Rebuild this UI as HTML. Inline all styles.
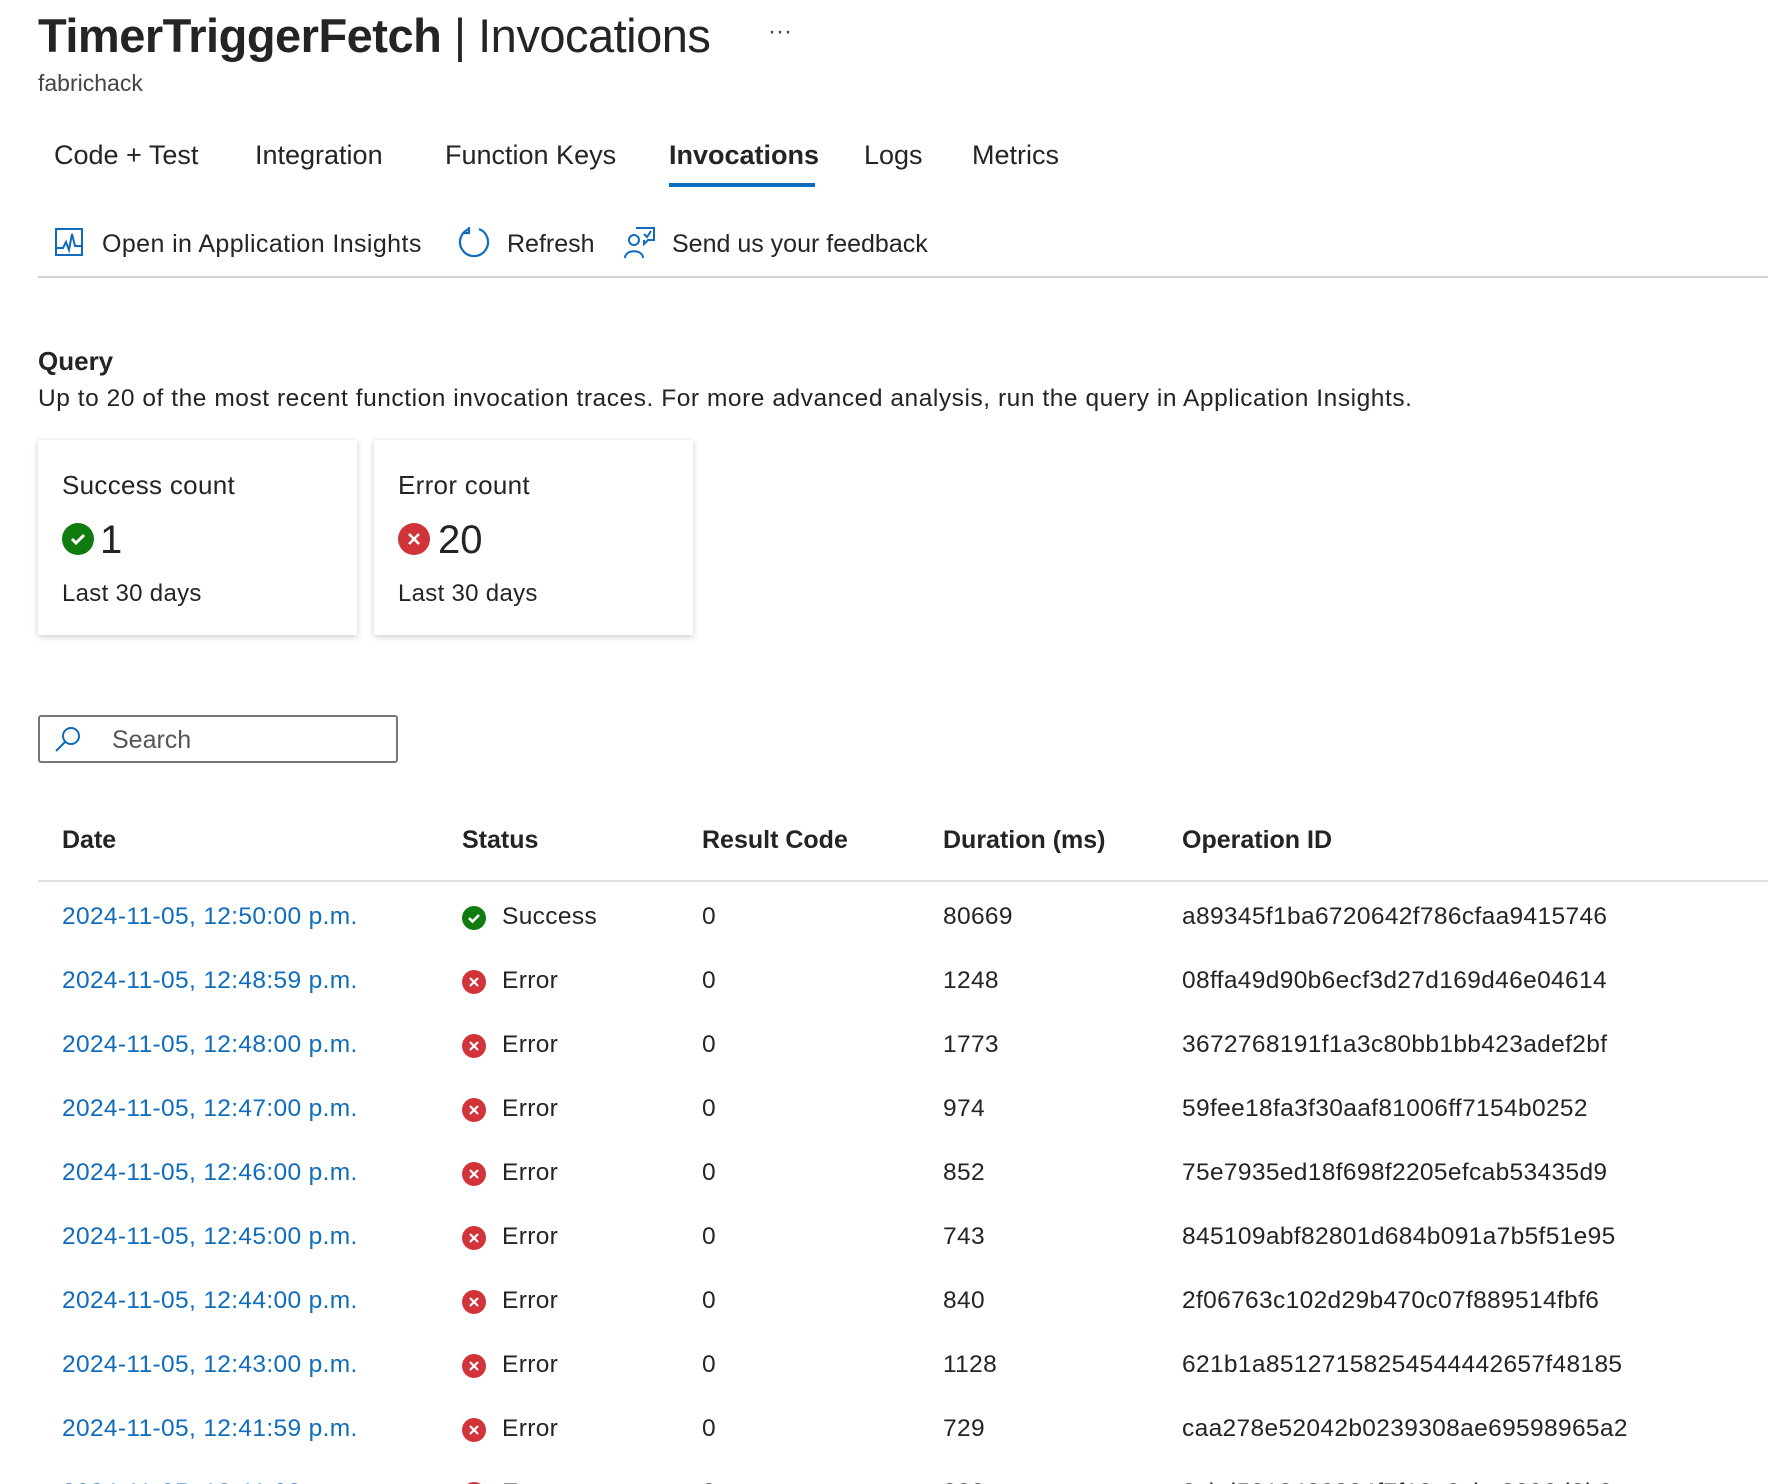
<!DOCTYPE html>
<html><head><meta charset="utf-8"><style>
*{margin:0;padding:0;box-sizing:border-box}
html,body{width:1768px;height:1484px;overflow:hidden}
body{background:#fff;font-family:"Liberation Sans",sans-serif;color:#242424;position:relative}
.a{position:absolute;white-space:nowrap}
.title{left:38px;top:8px;font-size:47px;font-weight:bold;letter-spacing:-0.5px}
.title span{font-weight:normal}
.sub{left:38px;top:70px;font-size:23px;color:#444}
.tab{top:140px;font-size:27px}
.tb{top:230px;font-size:25px}
.card{position:absolute;top:440px;width:319px;height:195px;background:#fff;box-shadow:0 2px 6px rgba(0,0,0,.2)}
.card .t{position:absolute;left:24px;top:30px;font-size:26px;letter-spacing:0.3px}
.card .n{position:absolute;left:64px;top:78px;font-size:40px}
.card .l{position:absolute;left:24px;top:140px;font-size:24px;letter-spacing:0.3px}
.ic{position:absolute;width:32px;height:32px;border-radius:50%}
.hd{top:826px;font-size:25px;font-weight:bold}
.cell{font-size:24.5px;letter-spacing:0.35px}
.link{color:#0f6cbd}
.dot{position:absolute;width:24px;height:24px;border-radius:50%}
</style></head><body>
<div class="a title">TimerTriggerFetch <span>| Invocations</span></div>
<div class="a" style="left:768px;top:18px;font-size:24px;color:#444">···</div>
<div class="a sub">fabrichack</div>
<div class="a tab" style="left:54px">Code + Test</div>
<div class="a tab" style="left:255px">Integration</div>
<div class="a tab" style="left:445px">Function Keys</div>
<div class="a tab" style="left:669px;font-weight:bold">Invocations</div>
<div class="a tab" style="left:864px">Logs</div>
<div class="a tab" style="left:972px">Metrics</div>
<div class="a" style="left:669px;top:183px;width:146px;height:4px;background:#0f6cbd"></div>

<svg class="a" style="left:55px;top:228px" width="28" height="28" viewBox="0 0 28 28"><rect x="1" y="1" width="26" height="26" fill="none" stroke="#0f6cbd" stroke-width="2"/><path d="M2 20 L8 20 L11 14 L14 22 L17 6 L20 18 L26 18" fill="none" stroke="#0f6cbd" stroke-width="2"/></svg>
<div class="a tb" style="left:102px;letter-spacing:0.4px">Open in Application Insights</div>
<svg class="a" style="left:457px;top:225px" width="34" height="34" viewBox="0 0 34 34"><path d="M12 4 A14 14 0 1 0 22 4" fill="none" stroke="#0f6cbd" stroke-width="2.2"/><path d="M12 2 L12 8 L6 8" fill="none" stroke="#0f6cbd" stroke-width="2.2"/></svg>
<div class="a tb" style="left:507px">Refresh</div>
<svg class="a" style="left:622px;top:225px" width="34" height="34" viewBox="0 0 34 34"><circle cx="12" cy="15" r="5" fill="none" stroke="#0f6cbd" stroke-width="2"/><path d="M3 33 C3 24 21 24 21 33" fill="none" stroke="#0f6cbd" stroke-width="2"/><path d="M14 3 L32 3 L32 15 L26 15 L22 19 L22 15" fill="none" stroke="#0f6cbd" stroke-width="2"/><path d="M22 9 L25 12 L29 6" fill="none" stroke="#0f6cbd" stroke-width="2"/></svg>
<div class="a tb" style="left:672px">Send us your feedback</div>
<div class="a" style="left:38px;top:276px;width:1730px;height:2px;background:#d1d1d1"></div>

<div class="a" style="left:38px;top:346px;font-size:26px;font-weight:bold">Query</div>
<div class="a" style="left:38px;top:385px;font-size:24.5px;letter-spacing:0.55px">Up to 20 of the most recent function invocation traces. For more advanced analysis, run the query in Application Insights.</div>

<div class="card" style="left:38px"><div class="t">Success count</div>
<div class="ic" style="left:24px;top:83px;background:#107c10"><svg width="32" height="32"><path d="M10 16 L14 20 L22 12" fill="none" stroke="#fff" stroke-width="3"/></svg></div>
<div class="n" style="left:62px">1</div><div class="l">Last 30 days</div></div>
<div class="card" style="left:374px"><div class="t">Error count</div>
<div class="ic" style="left:24px;top:83px;background:#d13438"><svg width="32" height="32"><path d="M11 11 L21 21 M21 11 L11 21" stroke="#fff" stroke-width="2.6"/></svg></div>
<div class="n" style="left:64px">20</div><div class="l">Last 30 days</div></div>

<div class="a" style="left:38px;top:715px;width:360px;height:48px;border:2px solid #777;border-radius:3px"></div>
<svg class="a" style="left:54px;top:725px" width="28" height="28" viewBox="0 0 28 28"><circle cx="17" cy="11" r="8" fill="none" stroke="#0f6cbd" stroke-width="2"/><path d="M11 17 L2 26" stroke="#0f6cbd" stroke-width="2"/></svg>
<div class="a" style="left:112px;top:726px;font-size:25px;color:#555">Search</div>

<div class="a hd" style="left:62px">Date</div>
<div class="a hd" style="left:462px">Status</div>
<div class="a hd" style="left:702px">Result Code</div>
<div class="a hd" style="left:943px">Duration (ms)</div>
<div class="a hd" style="left:1182px">Operation ID</div>
<div class="a" style="left:38px;top:880px;width:1730px;height:2px;background:#e0e0e0"></div>

<div id="rows"></div>
<script>
var d=[["2024-11-05, 12:50:00 p.m.",1,"80669","a89345f1ba6720642f786cfaa9415746"],
["2024-11-05, 12:48:59 p.m.",0,"1248","08ffa49d90b6ecf3d27d169d46e04614"],
["2024-11-05, 12:48:00 p.m.",0,"1773","3672768191f1a3c80bb1bb423adef2bf"],
["2024-11-05, 12:47:00 p.m.",0,"974","59fee18fa3f30aaf81006ff7154b0252"],
["2024-11-05, 12:46:00 p.m.",0,"852","75e7935ed18f698f2205efcab53435d9"],
["2024-11-05, 12:45:00 p.m.",0,"743","845109abf82801d684b091a7b5f51e95"],
["2024-11-05, 12:44:00 p.m.",0,"840","2f06763c102d29b470c07f889514fbf6"],
["2024-11-05, 12:43:00 p.m.",0,"1128","621b1a85127158254544442657f48185"],
["2024-11-05, 12:41:59 p.m.",0,"729","caa278e52042b0239308ae69598965a2"],
["2024-11-05, 12:41:00 p.m.",0,"800","3cbd5912432804f7f10e0cba3096d3b0"]];
var h="";
d.forEach(function(r,i){var c=918+i*64,t=c-15;
h+='<div class="a cell link" style="left:62px;top:'+t+'px">'+r[0]+'</div>';
h+='<div class="dot" style="left:462px;top:'+(c-12)+'px;background:'+(r[1]?'#107c10':'#d13438')+'"><svg width="24" height="24">'+(r[1]?'<path d="M7 12 L10.5 15.5 L17 9" fill="none" stroke="#fff" stroke-width="2.6"/>':'<path d="M8 8 L16 16 M16 8 L8 16" stroke="#fff" stroke-width="2.2"/>')+'</svg></div>';
h+='<div class="a cell" style="left:502px;top:'+t+'px">'+(r[1]?'Success':'Error')+'</div>';
h+='<div class="a cell" style="left:702px;top:'+t+'px">0</div>';
h+='<div class="a cell" style="left:943px;top:'+t+'px">'+r[2]+'</div>';
h+='<div class="a cell" style="left:1182px;top:'+t+'px">'+r[3]+'</div>';});
document.getElementById("rows").innerHTML=h;
</script>
</body></html>
